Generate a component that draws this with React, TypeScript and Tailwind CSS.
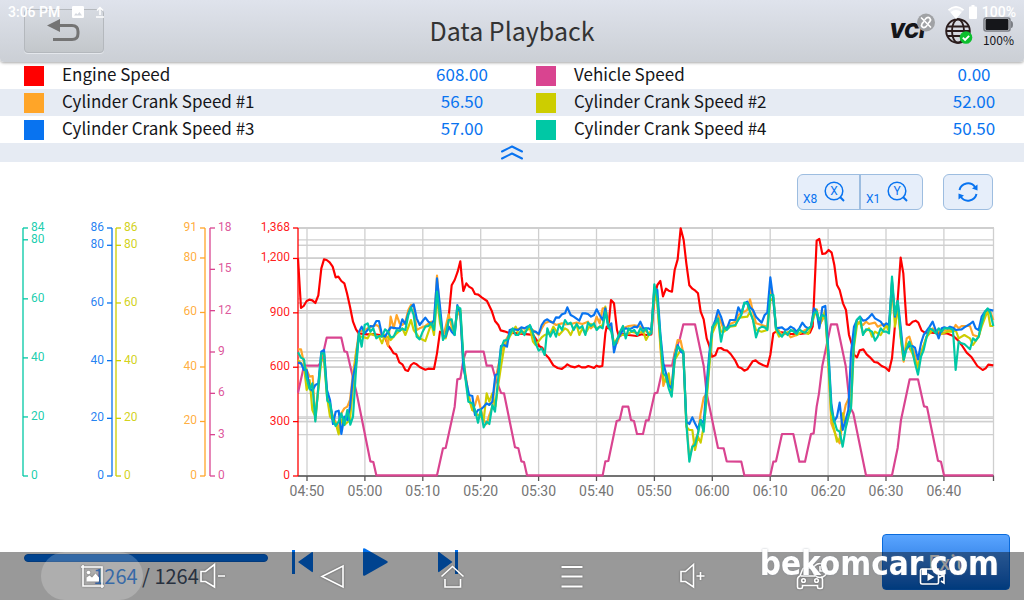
import type { ReactNode } from "react";

interface Signal {
  name: string;
  value: string;
  swatch: string;
}

interface Axis {
  x: number;
  color: string;
  side: "left" | "right";
  max: number;
  ticks: number[];
}

const rows: [Signal, Signal][] = [
  [
    { name: "Engine Speed", value: "608.00", swatch: "bg-[#ff0000]" },
    { name: "Vehicle Speed", value: "0.00", swatch: "bg-[#d94490]" },
  ],
  [
    { name: "Cylinder Crank Speed #1", value: "56.50", swatch: "bg-[#ffa528]" },
    { name: "Cylinder Crank Speed #2", value: "52.00", swatch: "bg-[#cdcd00]" },
  ],
  [
    { name: "Cylinder Crank Speed #3", value: "57.00", swatch: "bg-[#0873f0]" },
    { name: "Cylinder Crank Speed #4", value: "50.50", swatch: "bg-[#00c8a5]" },
  ],
];

const axes: Axis[] = [
  { x: 23, color: "#00c8a5", side: "right", max: 84, ticks: [84, 80, 60, 40, 20, 0] },
  { x: 112, color: "#0873f0", side: "left", max: 86, ticks: [86, 80, 60, 40, 20, 0] },
  { x: 116, color: "#cdcd00", side: "right", max: 86, ticks: [86, 80, 60, 40, 20, 0] },
  { x: 205, color: "#ffa528", side: "left", max: 91, ticks: [91, 80, 60, 40, 20, 0] },
  { x: 210, color: "#d94490", side: "right", max: 18, ticks: [18, 15, 12, 9, 6, 3, 0] },
  { x: 298, color: "#ff0000", side: "left", max: 1368, ticks: [1368, 1200, 900, 600, 300, 0] },
];

const times = ["04:50", "05:00", "05:10", "05:20", "05:30", "05:40", "05:50", "06:00", "06:10", "06:20", "06:30", "06:40"];

const TOP = 228;
const BOTTOM = 476;

const timeX = (i: number) => 307 + i * 57.9;
const tickY = (axis: Axis, tick: number) => BOTTOM - ((BOTTOM - TOP) * tick) / axis.max;

// Traces are recorded at three units per pixel, from the point (290, 220)
const traces = [
  {
    color: "#ff0000",
    points:
      "24,115 33,264 41,258 50,243 58,239 67,241 76,249 85,226 94,145 102,118 110,120 119,127 128,140 137,172 145,170 154,183 163,190 171,220 180,260 189,305 198,328 206,340 232,343 250,342 270,345 285,352 294,375 303,387 311,400 319,403 328,427 337,433 346,450 354,453 363,435 371,429 380,433 389,441 406,449 415,446 432,447 441,400 450,335 459,338 467,335 472,330 477,280 485,196 494,180 503,155 511,124 515,170 520,213 529,190 537,200 547,206 555,222 565,224 575,232 591,243 605,272 615,303 625,315 632,331 643,334 655,338 685,340 715,343 730,345 740,360 747,378 757,383 765,402 777,415 790,436 803,444 815,447 825,440 832,433 842,439 855,442 866,437 875,442 887,442 895,438 904,441 912,444 920,437 928,440 937,438 946,340 950,320 955,325 963,240 972,250 981,330 987,350 1000,342 1015,345 1040,348 1055,343 1070,345 1084,343 1093,235 1102,195 1111,183 1119,229 1128,206 1136,212 1146,215 1154,150 1163,118 1172,25 1181,60 1189,130 1198,196 1207,206 1216,212 1224,220 1232,275 1241,298 1250,355 1258,378 1266,410 1276,406 1284,385 1293,384 1302,390 1312,392 1322,402 1336,422 1345,441 1355,445 1363,452 1372,448 1388,424 1397,421 1406,429 1420,436 1432,440 1441,405 1450,340 1458,335 1480,338 1500,342 1530,342 1560,338 1568,320 1572,240 1580,62 1588,57 1597,102 1607,100 1616,90 1625,98 1633,135 1641,195 1649,210 1659,250 1668,270 1677,345 1687,378 1693,405 1701,412 1709,391 1720,388 1730,403 1740,412 1753,426 1763,428 1775,438 1787,443 1797,453 1806,415 1815,315 1823,240 1832,113 1840,160 1845,240 1850,313 1858,315 1868,305 1877,302 1885,308 1895,332 1905,338 1925,338 1950,340 1970,340 1990,348 2005,362 2015,375 2030,398 2045,412 2062,438 2078,450 2087,445 2095,434 2110,436",
  },
  {
    color: "#d94490",
    points:
      "24,518 42,437 85,437 94,425 110,353 154,353 163,394 171,396 180,435 200,520 241,724 250,726 259,766 441,766 459,685 467,684 494,560 502,478 511,476 520,420 528,395 581,395 590,437 606,437 615,470 633,519 642,520 675,682 685,685 694,724 702,726 711,766 938,766 946,724 955,723 980,603 989,600 998,560 1015,560 1023,600 1032,603 1041,642 1059,642 1068,601 1076,601 1094,520 1102,518 1120,437 1146,437 1155,395 1170,355 1180,313 1215,313 1241,437 1250,520 1284,684 1301,685 1310,724 1354,725 1363,766 1441,766 1450,725 1458,724 1476,642 1510,642 1528,725 1545,725 1563,642 1571,640 1580,560 1587,520 1597,437 1623,313 1641,313 1667,437 1680,560 1690,580 1728,766 1806,766 1823,684 1833,600 1859,478 1884,478 1902,559 1911,561 1944,722 1953,725 1962,766 2110,766",
  },
  {
    color: "#ffa528",
    points:
      "24,388 33,388 42,430 50,450 59,470 68,468 76,600 85,500 94,410 102,400 111,520 120,560 129,590 146,625 154,580 163,565 172,560 180,540 189,460 198,400 207,335 224,330 233,325 250,318 259,315 267,320 276,350 285,345 294,378 302,290 311,325 320,285 329,310 337,315 346,305 355,270 363,255 371,260 380,330 389,325 406,318 424,305 432,320 441,167 450,280 459,350 467,320 476,283 485,320 494,330 502,270 511,290 520,420 535,520 547,570 555,555 563,528 572,565 581,600 590,612 598,585 607,560 616,480 633,400 642,370 659,340 677,328 694,325 712,325 729,330 746,345 755,325 764,310 781,303 798,315 816,310 825,313 842,312 860,308 877,312 894,305 903,325 912,315 920,290 929,310 938,265 946,265 955,310 964,320 972,375 981,370 990,345 999,325 1016,318 1033,316 1051,320 1076,340 1084,335 1093,210 1102,235 1111,380 1120,498 1128,470 1145,500 1154,400 1163,360 1172,362 1180,400 1189,600 1198,715 1207,680 1224,640 1232,580 1241,533 1250,520 1258,420 1267,325 1284,285 1302,330 1320,312 1336,305 1345,285 1363,275 1372,270 1380,238 1389,275 1398,310 1415,315 1432,320 1441,200 1450,235 1458,320 1476,345 1493,340 1502,352 1520,345 1537,335 1563,320 1572,270 1580,268 1588,315 1606,285 1615,430 1624,610 1641,655 1649,670 1658,600 1667,555 1683,520 1692,350 1701,305 1719,315 1728,305 1737,312 1755,308 1763,320 1781,312 1797,325 1806,210 1815,290 1823,260 1832,350 1841,425 1850,355 1858,350 1867,380 1884,440 1893,400 1910,350 1928,325 1946,335 1972,330 1989,330 1997,315 2006,325 2015,318 2040,318 2049,345 2066,350 2075,310 2093,270 2101,275 2110,300",
  },
  {
    color: "#cdcd00",
    points:
      "24,420 33,430 42,440 50,510 59,480 67,570 76,590 85,510 94,420 102,420 111,530 120,590 137,610 146,643 154,600 163,615 180,600 189,500 198,400 207,350 215,350 233,355 241,340 250,345 267,350 276,370 285,345 302,360 320,340 337,325 346,345 363,300 371,330 389,355 406,363 424,310 432,345 441,230 450,310 459,345 467,355 476,320 494,335 502,275 511,270 520,430 535,530 547,570 564,585 572,590 581,600 590,520 598,545 607,520 616,560 624,500 633,440 642,385 659,350 677,320 685,340 703,335 720,325 729,365 737,375 755,352 764,345 781,340 790,320 807,345 825,325 833,330 842,345 851,325 860,315 868,345 877,325 886,340 903,312 920,325 938,315 946,260 955,315 964,330 972,370 990,345 1007,345 1025,335 1042,340 1060,335 1068,360 1084,330 1093,220 1102,250 1120,480 1128,485 1136,460 1145,525 1154,420 1172,390 1180,400 1189,620 1198,630 1207,630 1215,690 1224,650 1232,668 1241,620 1250,540 1258,440 1267,340 1284,300 1293,335 1302,335 1320,320 1336,318 1345,295 1354,292 1372,290 1380,275 1389,300 1398,330 1415,335 1432,330 1441,240 1450,235 1458,330 1467,350 1485,340 1511,330 1520,345 1537,335 1555,342 1572,290 1580,270 1588,320 1606,270 1615,420 1624,590 1641,665 1649,655 1658,580 1667,620 1683,560 1692,380 1701,315 1710,305 1719,340 1737,325 1746,350 1755,335 1772,345 1789,315 1797,335 1806,190 1815,320 1823,260 1832,350 1841,420 1850,370 1867,400 1884,445 1893,400 1910,350 1928,330 1946,345 1972,335 1989,335 1997,330 2006,355 2023,345 2040,355 2049,375 2066,350 2075,320 2093,272 2101,318 2110,318",
  },
  {
    color: "#0873f0",
    points:
      "24,428 33,430 42,450 50,450 59,505 67,512 76,495 85,490 94,395 102,390 111,510 120,540 129,612 137,575 146,572 154,642 163,590 172,600 180,560 189,470 198,430 207,335 215,320 224,340 233,330 241,318 250,320 259,303 267,303 276,345 285,350 294,335 302,322 320,325 329,325 337,298 346,312 355,280 363,262 371,253 380,295 389,315 398,303 406,293 415,305 424,312 432,300 441,175 450,260 459,350 467,350 476,320 485,335 494,345 502,255 511,280 520,440 528,480 537,525 547,528 555,585 564,570 573,568 581,560 590,550 598,555 607,545 616,465 624,462 633,378 642,375 651,380 659,330 668,327 685,330 694,322 703,325 712,320 720,318 729,335 737,335 746,342 755,315 764,302 772,298 781,305 790,308 798,292 807,293 816,283 825,280 832,262 842,285 851,290 868,302 877,280 886,280 894,282 903,290 912,285 920,268 929,285 938,300 946,265 955,320 964,310 972,397 981,360 990,345 999,330 1007,325 1016,328 1025,325 1033,320 1042,322 1051,305 1060,325 1076,325 1084,330 1093,205 1102,210 1111,340 1120,430 1128,460 1136,495 1145,505 1154,410 1163,375 1172,395 1180,400 1189,605 1198,612 1207,592 1215,610 1224,628 1232,600 1241,610 1250,490 1258,400 1267,325 1276,300 1284,270 1293,290 1302,320 1310,328 1320,300 1336,300 1345,262 1354,280 1363,250 1372,245 1380,262 1389,270 1398,290 1415,308 1424,285 1432,278 1441,172 1450,240 1458,325 1476,322 1485,330 1493,328 1502,320 1511,325 1520,335 1528,325 1537,308 1546,320 1555,325 1563,320 1572,265 1580,275 1588,325 1597,262 1606,258 1615,390 1624,550 1632,605 1641,590 1649,548 1658,630 1667,600 1675,570 1683,400 1692,320 1701,300 1710,290 1719,302 1728,300 1737,292 1746,282 1755,295 1772,305 1781,318 1789,310 1797,315 1806,185 1815,290 1823,243 1832,320 1841,410 1850,385 1858,378 1867,378 1875,383 1884,418 1893,370 1901,345 1919,320 1928,305 1937,330 1946,355 1955,325 1963,322 1972,325 1980,320 1989,323 1997,330 2015,328 2023,322 2040,312 2049,305 2057,325 2066,330 2075,290 2085,275 2093,268 2110,272",
  },
  {
    color: "#00c8a5",
    points:
      "24,397 33,413 42,418 50,475 59,508 67,490 76,604 85,500 94,400 102,400 112,542 120,550 129,600 137,618 146,605 154,580 163,615 172,570 181,614 189,590 198,450 207,340 215,380 224,315 233,310 241,335 250,325 259,355 267,348 276,350 285,328 294,335 302,352 311,350 320,330 329,333 337,326 346,330 355,285 363,262 371,285 380,350 389,358 398,335 406,320 415,318 424,310 432,330 441,215 450,290 459,360 467,345 476,300 485,298 494,345 502,260 511,265 520,410 528,490 535,545 547,550 555,570 564,608 572,570 581,622 590,605 598,612 607,555 615,575 624,480 633,385 642,362 651,360 659,345 668,325 677,345 685,345 694,330 703,345 712,325 720,315 729,340 737,370 746,392 755,385 764,405 772,325 781,350 790,330 798,350 807,315 816,330 825,300 833,312 842,308 851,330 860,312 868,325 877,318 886,345 894,308 903,318 912,310 920,330 929,320 938,325 946,275 955,320 964,335 972,375 981,360 990,335 999,318 1007,355 1016,325 1025,335 1033,330 1042,345 1051,325 1060,335 1068,325 1076,345 1084,340 1093,193 1102,235 1111,350 1120,460 1128,470 1136,505 1145,530 1154,420 1163,380 1172,388 1180,395 1189,610 1198,725 1207,680 1215,675 1224,640 1232,600 1241,635 1250,520 1258,420 1267,320 1276,310 1284,295 1293,365 1302,320 1310,330 1320,318 1336,315 1345,300 1354,285 1363,248 1372,250 1380,275 1389,300 1398,352 1407,325 1416,320 1424,322 1432,330 1441,225 1450,225 1458,325 1467,340 1476,350 1485,335 1493,345 1502,330 1511,335 1520,342 1528,328 1537,335 1546,338 1555,325 1563,320 1572,280 1580,275 1588,300 1597,285 1606,290 1615,400 1624,570 1632,600 1641,630 1649,635 1658,680 1667,625 1675,590 1683,565 1691,380 1700,300 1710,290 1719,345 1728,328 1737,330 1746,335 1755,362 1763,350 1772,325 1781,335 1789,335 1797,340 1806,170 1815,285 1823,243 1832,340 1841,420 1850,385 1858,365 1867,390 1875,430 1884,464 1893,410 1901,390 1910,350 1919,325 1928,330 1937,340 1946,325 1955,335 1963,325 1980,325 1989,330 1997,450 2006,365 2015,370 2023,372 2040,388 2049,355 2057,362 2066,350 2075,310 2085,275 2093,265 2101,280 2110,318",
  },
];

function StatusBar() {
  return (
    <div className="pointer-events-none absolute inset-x-0 top-0 flex h-6 items-center justify-between px-2 font-[Roboto,sans-serif] text-sm font-medium text-white">
      <div className="flex items-center gap-3">
        <span>3:06 PM</span>
        <svg width="12" height="12" viewBox="0 0 12 12" fill="#fff">
          <path fillRule="evenodd" d="M1.3 0h9.4Q12 0 12 1.3v9.4Q12 12 10.700 12H1.3Q0 12 0 10.700V1.3Q0 0 1.300 0zM2 9.500h8L7.400 6 5.400 8.500 4 7z" />
        </svg>
        <svg width="8" height="12" viewBox="0 0 8 12" fill="none" stroke="#fff" strokeWidth="1.500">
          <path d="M1 4.500 4 1.500l3 3M4 2v7M0 11h8" />
        </svg>
      </div>
      <div className="flex items-center gap-1">
        <svg width="16" height="13" viewBox="0 0 16 13">
          <path d="M0 3.500Q8-3.500 16 3.500L8 13z" fill="#fff" fillOpacity="0.5" />
          <path d="M2.500 6.200Q8 2 13.500 6.200L8 13zM0 3.500Q8-3.500 16 3.500l-1 1.200Q8-1 1 4.700z" fill="#fff" />
        </svg>
        <svg width="10" height="14" viewBox="0 0 10 14" fill="#fff">
          <path d="M3.500 0h3v1.500H8q1 0 1 1V13q0 1-1 1H2q-1 0-1-1V2.500q0-1 1-1h1.500z" />
        </svg>
        <span>100%</span>
      </div>
    </div>
  );
}

function Header() {
  return (
    <header className="relative z-10 grid h-[62px] grid-cols-3 items-center rounded-b bg-linear-to-b from-[#dfe3ec] to-[#cbcfd5] shadow-[0_1px_3px_rgba(0,0,0,0.35)]">
      <button
        aria-label="Back"
        className="ml-6 flex h-11 w-20 items-center justify-center rounded border border-[#b4b8bd] bg-linear-to-b from-[#d6dae1] to-[#c3c7cb] shadow-[0_1px_0_#e4e7ec]"
      >
        <svg width="34" height="26" viewBox="0 0 34 26">
          <path d="M12 7.500h13q6 0 6 6v2q0 6-6 6H6" fill="none" stroke="#747474" strokeWidth="3" />
          <path d="M0 7.500 13 1v13z" fill="#747474" />
        </svg>
      </button>
      <h1 className="pb-0.5 text-center text-[25px] leading-8 text-[#333]">Data Playback</h1>
      <div className="flex items-center justify-end gap-[10px] pr-[10px]">
        <svg width="48" height="36" viewBox="0 0 48 36">
          <text x="2" y="25" fontFamily="Inter, sans-serif" fontSize="20" fontWeight="900" fontStyle="italic" fill="#15161a">
            VCI
          </text>
          <circle cx="39" cy="9.500" r="9" fill="#a0a2a5" />
          <g fill="none" stroke="#fff" strokeWidth="1.700" strokeLinecap="round">
            <path d="M34.500 5l9 9" />
            <path d="m38 6.500 1.500-1.500q1.800-1.200 3.200.2t.2 3.200L41.500 10M40 12.500 38.500 14q-1.800 1.200-3.200-.2t-.2-3.200L36.500 9" />
          </g>
        </svg>
        <svg width="28" height="28" viewBox="0 0 28 28">
          <g fill="none" stroke="#2a1c1c" strokeWidth="1.900">
            <circle cx="13" cy="14" r="11.800" />
            <ellipse cx="13" cy="14" rx="6" ry="11.800" />
            <path d="M2.500 9.500h21M1.200 14h23.600M2.500 19h21" />
          </g>
          <circle cx="21" cy="20.500" r="6.300" fill="#0cbf2e" />
          <path d="m17.800 20.700 2.300 2.300 4-4.200" fill="none" stroke="#fff" strokeWidth="1.900" />
        </svg>
        <div className="flex flex-col items-center pt-0.5 text-xs leading-4 text-[#15161a]">
          <svg width="30" height="15" viewBox="0 0 30 15">
            <rect x="1" y="1" width="26" height="13" rx="2" fill="#e6e8ec" stroke="#7b7e84" strokeWidth="1.500" />
            <rect x="2.500" y="2" width="23" height="11" rx="1" fill="#15161a" />
            <path d="M28 4q2 0 2 3.500T28 11z" fill="#7b7e84" />
          </svg>
          <span>100%</span>
        </div>
      </div>
      <StatusBar />
    </header>
  );
}

function SignalTable() {
  return (
    <table className="w-full table-fixed text-[17px] leading-[23px] text-[#15161a]">
      <tbody>
        {rows.map((pair) => (
          <tr key={pair[0].name} className="h-[27px] even:bg-[#e6ebf3]">
            {pair.map((signal) => (
              <td key={signal.name} className="p-0">
                <div className="flex items-center pl-6">
                  <span className={`size-5 ${signal.swatch}`} />
                  <span className="flex-1 pb-1 pl-[18px]">{signal.name}</span>
                  <span className="w-[100px] pb-1 text-center text-[#0873f0]">{signal.value}</span>
                </div>
              </td>
            ))}
          </tr>
        ))}
      </tbody>
    </table>
  );
}

function ZoomIcon({ letter }: { letter: string }) {
  return (
    <svg width="22" height="22" viewBox="0 0 22 22">
      <g fill="none" stroke="#0873f0" strokeWidth="1.500">
        <circle cx="10" cy="10" r="8.800" />
        <path d="m15.800 15.800 4.200 4.200" strokeWidth="2" />
      </g>
      <text x="10" y="14" textAnchor="middle" fontSize="12" fill="#0873f0">
        {letter}
      </text>
    </svg>
  );
}

function ChartControls() {
  return (
    <div className="flex h-9 justify-end gap-5 pr-[31px] font-[Roboto,sans-serif] text-[#0873f0]">
      <div className="flex divide-x-2 divide-[#9dbde0] rounded-md border border-[#9dbde0] bg-[#e6eefa]">
        <button className="flex w-[63px] items-center gap-[7px] pl-[5px]">
          <span className="pt-[14px] text-xs">X8</span>
          <ZoomIcon letter="X" />
        </button>
        <button className="flex w-[61px] items-center gap-[7px] pl-[5px]">
          <span className="pt-[14px] text-xs">X1</span>
          <ZoomIcon letter="Y" />
        </button>
      </div>
      <button aria-label="Reset" className="flex w-[50px] items-center justify-center rounded-md border border-[#9dbde0] bg-[#e6eefa]">
        <svg width="22" height="22" viewBox="0 0 22 22">
          <path d="M2.500 9A8.700 8.700 0 0 1 18 6M19.500 13A8.700 8.700 0 0 1 4 16" fill="none" stroke="#0873f0" strokeWidth="2" />
          <path d="M20.500 3.500v6l-5.500-2zM1.500 18.500v-6l5.500 2z" fill="#0873f0" />
        </svg>
      </button>
    </div>
  );
}

function Chart() {
  return (
    <svg viewBox="0 215 1024 290" className="w-full font-[Roboto,sans-serif]" role="img" aria-label="Signal history">
      <g stroke="#cfcfcf" strokeWidth="1.300">
        {axes.map((axis) =>
          axis.ticks.map((tick) => (
            <line key={`${axis.x}-${tick}`} x1="298" x2="994" y1={tickY(axis, tick)} y2={tickY(axis, tick)} />
          ))
        )}
        {times.map((time, i) => (
          <line key={time} x1={timeX(i)} x2={timeX(i)} y1={TOP} y2={BOTTOM} />
        ))}
        <line x1="993.500" x2="993.500" y1={TOP} y2={BOTTOM} />
      </g>

      <g stroke="#555" strokeWidth="1.300">
        <line x1="298" x2="994" y1={BOTTOM} y2={BOTTOM} />
        {times.map((time, i) => (
          <line key={time} x1={timeX(i)} x2={timeX(i)} y1={BOTTOM} y2={BOTTOM + 5} />
        ))}
        <line x1="993.500" x2="993.500" y1={BOTTOM} y2={BOTTOM + 5} />
      </g>
      <g fill="#757575" fontSize="14" textAnchor="middle">
        {times.map((time, i) => (
          <text key={time} x={timeX(i)} y="496">
            {time}
          </text>
        ))}
      </g>

      {axes.map((axis) => {
        const dir = axis.side === "left" ? -1 : 1;
        return (
          <g key={axis.x}>
            <g stroke={axis.color} strokeWidth="1.300">
              <line x1={axis.x} x2={axis.x} y1={TOP} y2={BOTTOM} />
              {axis.ticks.map((tick) => (
                <line key={tick} x1={axis.x} x2={axis.x + dir * 5} y1={tickY(axis, tick)} y2={tickY(axis, tick)} />
              ))}
            </g>
            <g fill={axis.color} fillOpacity="0.9" fontSize="12" textAnchor={axis.side === "left" ? "end" : "start"}>
              {axis.ticks.map((tick) => (
                <text key={tick} x={axis.x + dir * 8} y={tickY(axis, tick) + 3}>
                  {tick.toLocaleString("en-US")}
                </text>
              ))}
            </g>
          </g>
        );
      })}

      <g transform="translate(290 220) scale(0.33333)" fill="none" strokeWidth="6.500" strokeLinejoin="round">
        {traces.map((trace) => (
          <polyline key={trace.color} points={trace.points} stroke={trace.color} />
        ))}
      </g>
    </svg>
  );
}

function Footer() {
  return (
    <footer className="mt-auto flex items-start pr-[14px] pb-[10px] pl-6">
      <div className="w-[244px] pt-5 text-center">
        <div className="h-2 rounded-sm border border-[#0562cf] bg-[#0070ee]" />
        <p className="text-xl leading-7 text-[#44526a]">
          <span className="text-[#0873f0]">1264</span> / 1264
        </p>
      </div>
      <div className="flex flex-1 items-center gap-[50px] pt-[14px] pl-6">
        <button aria-label="Previous">
          <svg width="21" height="28" viewBox="0 0 21 28" fill="#0070ee">
            <path d="M0 2h3v24H0zM6 14 20 4q1-.5 1 1v18q0 1.500-1 1z" />
          </svg>
        </button>
        <button aria-label="Play">
          <svg width="25" height="28" viewBox="0 0 25 28" fill="#0070ee">
            <path d="M0 1.500Q0-.5 2 .5l22 12.500q1.500 1 0 2L2 27.500q-2 1-2-1z" />
          </svg>
        </button>
        <button aria-label="Next">
          <svg width="21" height="28" viewBox="0 0 21 28" fill="#0070ee">
            <path d="M17 2h3v24h-3zM14.500 14 1 4Q0 3.500 0 5v18q0 1.500 1 1z" />
          </svg>
        </button>
      </div>
      <button className="h-14 w-32 rounded border border-[#0a6bdc] bg-linear-to-b from-[#5aa5ff] to-[#0062d0] text-xl font-medium text-white">
        Exit
      </button>
    </footer>
  );
}

function NavButton({ label, children }: { label: string; children: ReactNode }) {
  return (
    <button aria-label={label} className="flex h-12 w-[102px] items-center justify-center justify-self-center rounded-full first:bg-white/20">
      <svg
        width="32"
        height="32"
        viewBox="0 0 32 32"
        fill="none"
        stroke="#fff"
        strokeWidth="1.600"
        className="drop-shadow-[0_0_1px_rgba(0,0,0,0.4)]"
      >
        {children}
      </svg>
    </button>
  );
}

function NavBar() {
  return (
    <nav className="fixed inset-x-0 bottom-0 z-20 grid h-12 grid-cols-8 bg-black/40 px-8">
      <NavButton label="Screenshot">
        <path d="M7 5v21h21M5 7h21v21" />
        <path d="M10.500 21.500v-4l3-2 2.500 2 3.500-4 3.500 4v4z" fill="#fff" stroke="none" />
        <circle cx="12.500" cy="12.500" r="1.800" fill="#fff" stroke="none" />
      </NavButton>
      <NavButton label="Volume down">
        <path d="M5 11.500h4.500L18.500 4.500v22.500L9.500 21.500H5zM22 16h7" />
      </NavButton>
      <NavButton label="Back">
        <path d="M6 16.500 27 6v21z" />
      </NavButton>
      <NavButton label="Home">
        <path d="m5.500 16.500 11-10 11 10M9 19v8h15.500v-8" />
      </NavButton>
      <NavButton label="Menu">
        <path d="M5.500 7h21M5.500 16.500h21M5.500 26.500h21" strokeWidth="2" />
      </NavButton>
      <NavButton label="Volume up">
        <path d="M5 11.500h4.500L17.500 4.500v22.500L9.500 21.500H5zM20.500 16h8M24.500 12v8" />
      </NavButton>
      <NavButton label="Vehicle">
        <path d="M17 8H8.500q-1.500 0-2 1.500L4 16q-2.500 1-2.500 3.500V27q0 1.500 1.500 1.500h2q1.500 0 1.500-1.500v-1.500h15V27q0 1.500 1.500 1.500h2q1.500 0 1.500-1.500v-7.500q0-1.500-1.500-2.500M5 16h14" />
        <circle cx="7.500" cy="20.500" r="1.800" />
        <circle cx="20.500" cy="20.500" r="1.800" />
        <circle cx="24" cy="10.500" r="7" />
        <path d="M24 6v5h4" />
      </NavButton>
      <NavButton label="Record">
        <path d="M6 9h15q1.500 0 1.500 1.500v12Q22.500 24 21 24H6q-1.500 0-1.500-1.500v-12Q4.500 9 6 9zM22.500 18l5.500-3.500v8.500l-3-2" />
        <path d="m11.500 13 7 4-7 4z" fill="#fff" stroke="none" />
      </NavButton>
    </nav>
  );
}

export default function App() {
  return (
    <div className="flex min-h-screen flex-col bg-white font-['Noto_Sans_CJK_SC',sans-serif]">
      <Header />
      <SignalTable />
      <button aria-label="Collapse" className="flex h-[19px] items-center justify-center bg-[#e6ebf3]">
        <svg width="22" height="15" viewBox="0 0 22 15" fill="none" stroke="#0873f0" strokeWidth="2" strokeLinecap="round" strokeLinejoin="round">
          <path d="M1 6.500 11 1.500l10 5M1 13.500 11 8.500l10 5" />
        </svg>
      </button>
      <main className="pt-3">
        <ChartControls />
        <div className="pt-[5px]">
          <Chart />
        </div>
      </main>
      <Footer />
      <NavBar />
      <div className="pointer-events-none fixed right-[25px] bottom-[14px] z-30 font-['DejaVu_Sans_Condensed','DejaVu_Sans',sans-serif] text-[33px] leading-[44px] font-bold text-white [text-shadow:0_0_2px_rgba(120,130,145,0.6)]">
        bekomcar.com
      </div>
    </div>
  );
}
